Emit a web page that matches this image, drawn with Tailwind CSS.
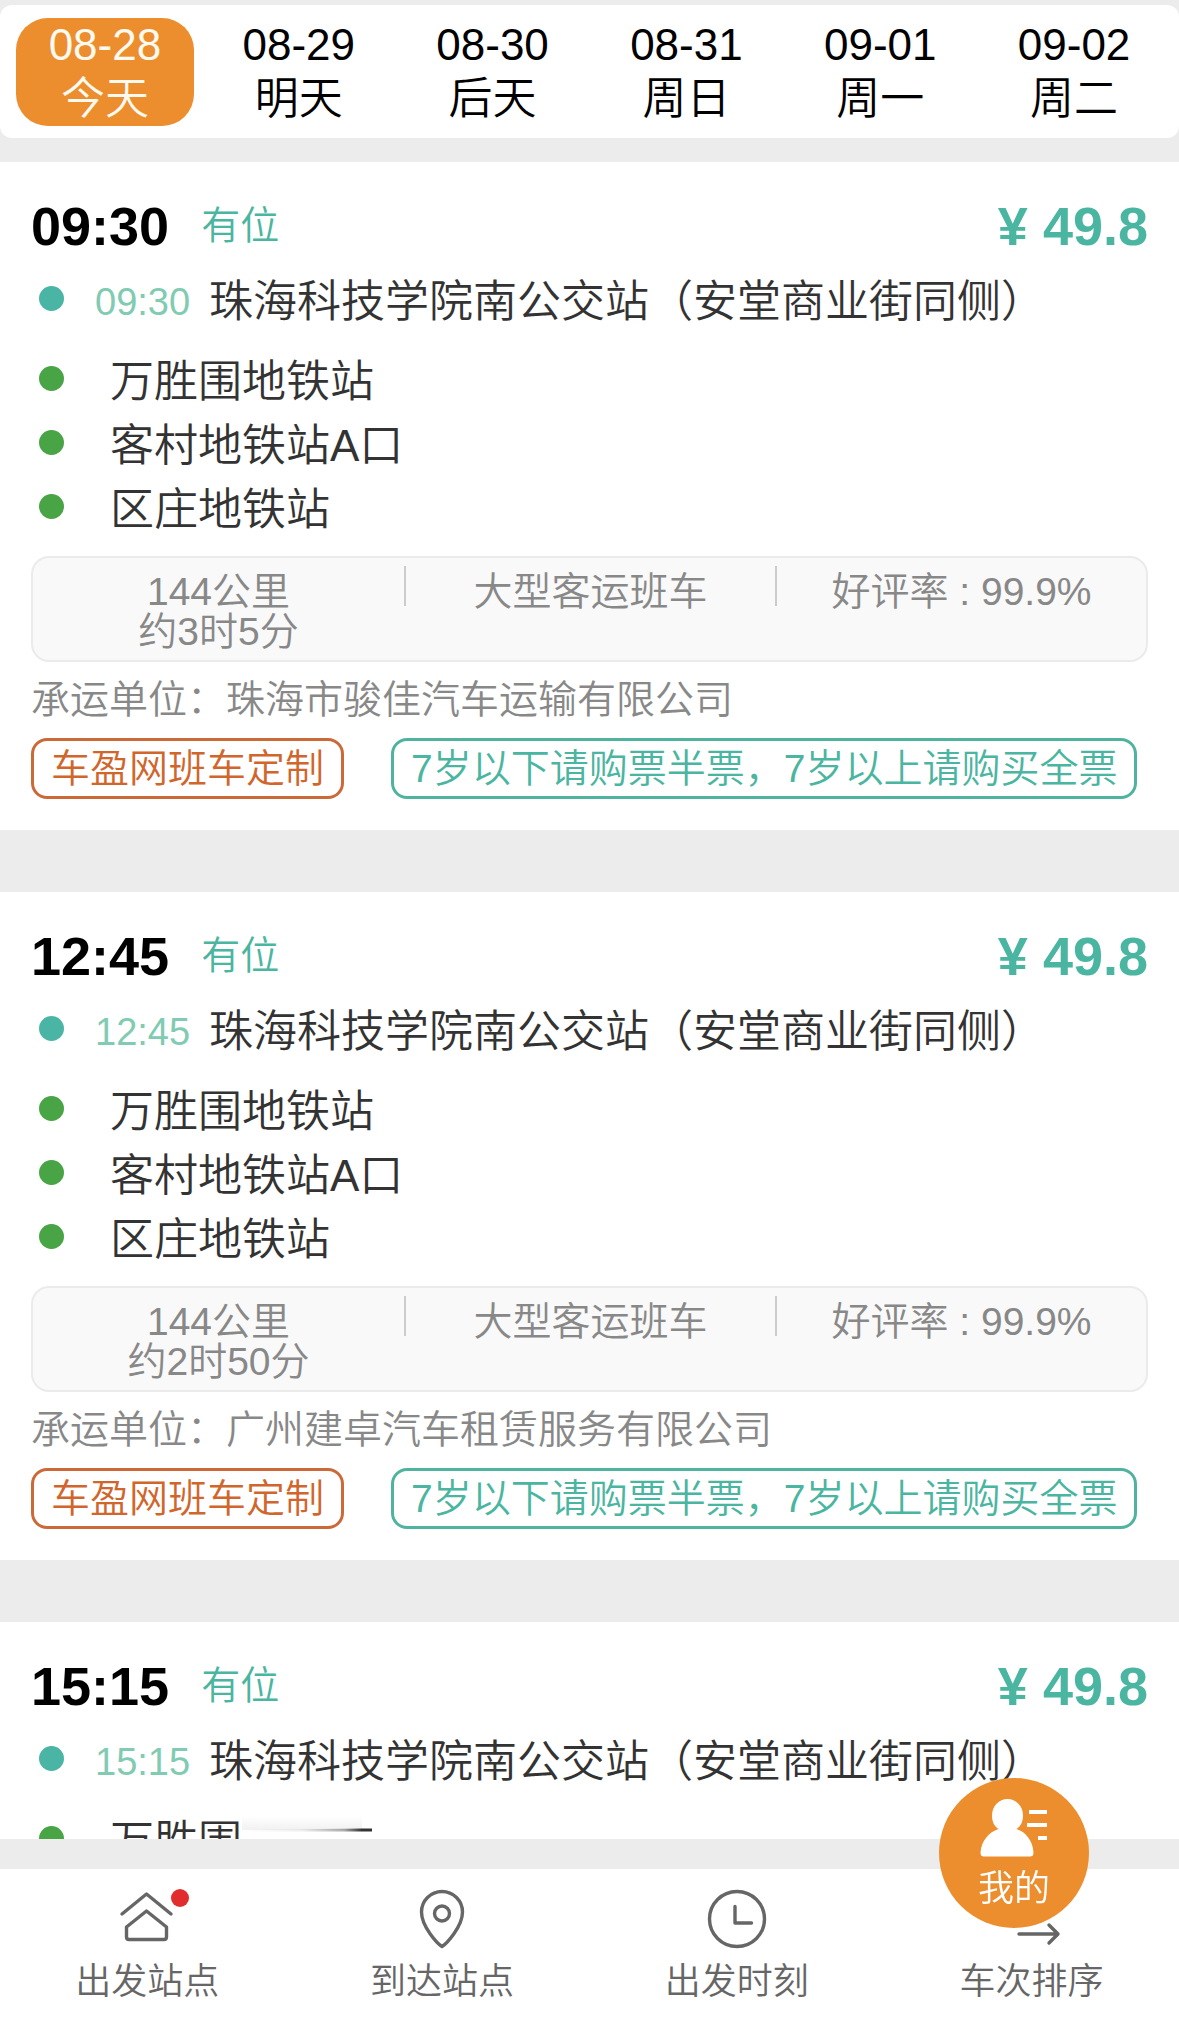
<!DOCTYPE html>
<html lang="zh-CN">
<head>
<meta charset="utf-8">
<meta name="viewport" content="width=device-width, initial-scale=1">
<title>班车车次</title>
<script src="https://cdn.jsdelivr.net/npm/@tailwindcss/browser@4"></script>
</head>
<body class="flex h-screen flex-col overflow-hidden bg-[#ececec] pt-[5px] font-['Liberation_Sans','Noto_Sans_CJK_SC',sans-serif] font-[350] text-[#333]">

<!-- Date picker -->
<div class="grid shrink-0 grid-cols-6 rounded-xl bg-white px-2 pt-[13px] pb-3 text-[44px] leading-[54px] text-black">
  <button class="mx-2 rounded-[32px] bg-[#ec8e2d] text-[#fffaf0]"><span class="block">08-28</span><span class="block">今天</span></button>
  <button class="mx-2"><span class="block">08-29</span><span class="block">明天</span></button>
  <button class="mx-2"><span class="block">08-30</span><span class="block">后天</span></button>
  <button class="mx-2"><span class="block">08-31</span><span class="block">周日</span></button>
  <button class="mx-2"><span class="block">09-01</span><span class="block">周一</span></button>
  <button class="mx-2"><span class="block">09-02</span><span class="block">周二</span></button>
</div>

<!-- Departures -->
<main class="mt-6 flex min-h-0 flex-1 flex-col gap-[62px] overflow-hidden">
  <article class="shrink-0 bg-white px-[31px] pt-8 pb-[31px]">
    <header class="flex h-16 items-center">
      <h2 class="text-[54px] leading-[64px] font-bold text-black">09:30</h2>
      <span class="ml-8 text-[39px] leading-[64px] text-[#4ab5a0]">有位</span>
      <span class="ml-auto text-[54px] leading-[64px] font-bold text-[#4ab5a0]">¥ 49.8</span>
    </header>
    <div class="mt-3 flex h-16 items-center pl-2">
      <i class="mb-2 size-[25px] rounded-full bg-[#4ab5a5]"></i>
      <span class="ml-[31px] w-[97px] text-[38px] leading-[64px] text-[#80cbb2]">09:30</span>
      <span class="ml-[17px] text-[44px] leading-[64px]">珠海科技学院南公交站（安堂商业街同侧）</span>
    </div>
    <ul class="mt-4 text-[44px] leading-[64px]">
      <li class="flex items-center pl-2"><i class="mb-2 size-[25px] rounded-full bg-[#48a444]"></i><span class="ml-[46px]">万胜围地铁站</span></li>
      <li class="flex items-center pl-2"><i class="mb-2 size-[25px] rounded-full bg-[#48a444]"></i><span class="ml-[46px]">客村地铁站A口</span></li>
      <li class="flex items-center pl-2"><i class="mb-2 size-[25px] rounded-full bg-[#48a444]"></i><span class="ml-[46px]">区庄地铁站</span></li>
    </ul>
    <div class="mt-[14px] grid grid-cols-3 rounded-[18px] border-2 border-[#ebebeb] bg-[#f9f9f9] pt-2 pb-2 text-center text-[39px] leading-[40px] text-[#888]">
      <div class="pt-[6px]"><p>144公里</p><p>约3时5分</p></div>
      <div class="flex"><i class="h-10 w-[2px] bg-[#ccc]"></i><p class="flex-1 pt-[6px]">大型客运班车</p></div>
      <div class="flex"><i class="h-10 w-[2px] bg-[#ccc]"></i><p class="flex-1 pt-[6px]">好评率 : 99.9%</p></div>
    </div>
    <p class="mt-[18px] text-[39px] leading-[40px] text-[#888]">承运单位：珠海市骏佳汽车运输有限公司</p>
    <div class="mt-[18px] flex gap-[47px] text-[39px] leading-[55px] whitespace-nowrap">
      <span class="rounded-2xl border-3 border-[#cb6a38] px-[17px] text-[#d0662c]">车盈网班车定制</span>
      <span class="rounded-2xl border-3 border-[#4fb3a0] px-[17px] text-[#4ab5a0]">7岁以下请购票半票，7岁以上请购买全票</span>
    </div>
  </article>

  <article class="shrink-0 bg-white px-[31px] pt-8 pb-[31px]">
    <header class="flex h-16 items-center">
      <h2 class="text-[54px] leading-[64px] font-bold text-black">12:45</h2>
      <span class="ml-8 text-[39px] leading-[64px] text-[#4ab5a0]">有位</span>
      <span class="ml-auto text-[54px] leading-[64px] font-bold text-[#4ab5a0]">¥ 49.8</span>
    </header>
    <div class="mt-3 flex h-16 items-center pl-2">
      <i class="mb-2 size-[25px] rounded-full bg-[#4ab5a5]"></i>
      <span class="ml-[31px] w-[97px] text-[38px] leading-[64px] text-[#80cbb2]">12:45</span>
      <span class="ml-[17px] text-[44px] leading-[64px]">珠海科技学院南公交站（安堂商业街同侧）</span>
    </div>
    <ul class="mt-4 text-[44px] leading-[64px]">
      <li class="flex items-center pl-2"><i class="mb-2 size-[25px] rounded-full bg-[#48a444]"></i><span class="ml-[46px]">万胜围地铁站</span></li>
      <li class="flex items-center pl-2"><i class="mb-2 size-[25px] rounded-full bg-[#48a444]"></i><span class="ml-[46px]">客村地铁站A口</span></li>
      <li class="flex items-center pl-2"><i class="mb-2 size-[25px] rounded-full bg-[#48a444]"></i><span class="ml-[46px]">区庄地铁站</span></li>
    </ul>
    <div class="mt-[14px] grid grid-cols-3 rounded-[18px] border-2 border-[#ebebeb] bg-[#f9f9f9] pt-2 pb-2 text-center text-[39px] leading-[40px] text-[#888]">
      <div class="pt-[6px]"><p>144公里</p><p>约2时50分</p></div>
      <div class="flex"><i class="h-10 w-[2px] bg-[#ccc]"></i><p class="flex-1 pt-[6px]">大型客运班车</p></div>
      <div class="flex"><i class="h-10 w-[2px] bg-[#ccc]"></i><p class="flex-1 pt-[6px]">好评率 : 99.9%</p></div>
    </div>
    <p class="mt-[18px] text-[39px] leading-[40px] text-[#888]">承运单位：广州建卓汽车租赁服务有限公司</p>
    <div class="mt-[18px] flex gap-[47px] text-[39px] leading-[55px] whitespace-nowrap">
      <span class="rounded-2xl border-3 border-[#cb6a38] px-[17px] text-[#d0662c]">车盈网班车定制</span>
      <span class="rounded-2xl border-3 border-[#4fb3a0] px-[17px] text-[#4ab5a0]">7岁以下请购票半票，7岁以上请购买全票</span>
    </div>
  </article>

  <article class="shrink-0 bg-white px-[31px] pt-8 pb-[31px]">
    <header class="flex h-16 items-center">
      <h2 class="text-[54px] leading-[64px] font-bold text-black">15:15</h2>
      <span class="ml-8 text-[39px] leading-[64px] text-[#4ab5a0]">有位</span>
      <span class="ml-auto text-[54px] leading-[64px] font-bold text-[#4ab5a0]">¥ 49.8</span>
    </header>
    <div class="mt-3 flex h-16 items-center pl-2">
      <i class="mb-2 size-[25px] rounded-full bg-[#4ab5a5]"></i>
      <span class="ml-[31px] w-[97px] text-[38px] leading-[64px] text-[#80cbb2]">15:15</span>
      <span class="ml-[17px] text-[44px] leading-[64px]">珠海科技学院南公交站（安堂商业街同侧）</span>
    </div>
    <div class="mt-4 flex h-16 items-center pl-2 text-[44px] leading-[64px]">
      <i class="mb-2 size-[25px] rounded-full bg-[#48a444]"></i><span class="ml-[46px]">万胜围</span>
      <svg class="mb-7 h-6 w-[132px]" viewBox="0 0 132 24" aria-hidden="true">
        <defs>
          <linearGradient id="fade"><stop offset="0" stop-color="#333" stop-opacity="0"/><stop offset=".5" stop-color="#333" stop-opacity=".08"/><stop offset=".85" stop-color="#333" stop-opacity=".4"/><stop offset="1" stop-color="#333"/></linearGradient>
          <linearGradient id="haze" x1="0" y1="0" x2="0" y2="1"><stop offset="0" stop-color="#ddd" stop-opacity="0"/><stop offset="1" stop-color="#ddd" stop-opacity=".4"/></linearGradient>
        </defs>
        <path d="M0 0H120V14H0z" fill="url(#haze)"/>
        <path d="M0 14L120 12.500V15.500H0z" fill="url(#fade)"/>
        <path d="M120 12.500h10v3h-10z" fill="#333"/>
      </svg>
    </div>
  </article>
</main>

<!-- Bottom navigation -->
<nav class="mt-[30px] grid shrink-0 grid-cols-4 bg-white pt-[18px] pb-2 text-[36px] leading-[54px] text-[#666]">
  <a href="#from" class="flex flex-col items-center gap-1">
    <svg class="h-16 w-24" viewBox="0 0 96 64" fill="none" stroke="#666" stroke-width="3.4" stroke-linecap="round" stroke-linejoin="round" aria-hidden="true"><path d="M23 27L47.500 7L72 27M27.500 40L47.500 24L67.500 40V50q0 2.500-2.500 2.500H30q-2.500 0-2.500-2.500z"/><circle cx="81" cy="11" r="9" fill="#e12d2d" stroke="none"/></svg>
    <span>出发站点</span>
  </a>
  <a href="#to" class="flex flex-col items-center gap-1">
    <svg class="h-16 w-24" viewBox="0 0 96 64" fill="none" stroke="#666" stroke-width="3.4" stroke-linejoin="round" aria-hidden="true"><path d="M48 59.500C44 57 27.500 40 27.500 25a20.500 20.500 0 0 1 41 0C68.500 40 52 57 48 59.500z"/><circle cx="48" cy="26.500" r="7.500"/></svg>
    <span>到达站点</span>
  </a>
  <a href="#time" class="flex flex-col items-center gap-1">
    <svg class="h-16 w-24" viewBox="0 0 96 64" fill="none" stroke="#666" stroke-width="3.4" stroke-linecap="round" stroke-linejoin="round" aria-hidden="true"><circle cx="48" cy="32" r="27.500"/><path d="M46 19.500V36H62.500"/></svg>
    <span>出发时刻</span>
  </a>
  <a href="#sort" class="flex flex-col items-center gap-1">
    <svg class="h-16 w-24" viewBox="0 0 96 64" fill="none" stroke="#666" stroke-width="3.4" stroke-linecap="round" stroke-linejoin="round" aria-hidden="true"><path d="M35 47H73M65 38L74 47L65 56"/></svg>
    <span>车次排序</span>
  </a>
</nav>

<!-- Floating account button -->
<button class="fixed right-[90px] bottom-[89px] flex size-[150px] flex-col items-center gap-[2px] rounded-full bg-[#ec8e2d] pt-5 text-[36px] leading-[54px] text-white">
  <svg class="h-[62px] w-[68px]" viewBox="0 0 68 62" fill="#fff" aria-hidden="true"><path d="M18.500 31C14 28 12 23.500 12 17.500a15 16 0 0 1 31 0C43 23.500 41 28 36.500 31C46 34 53 43 53.500 55q0 3.500-3.500 3.500H4Q.500 58.500.500 55C1 43 9 34 18.500 31z"/><path d="M49 12h18v4H49zM47 25h20v4H47zM58 38h9v4h-9z"/></svg>
  <span>我的</span>
</button>
</body>
</html>
